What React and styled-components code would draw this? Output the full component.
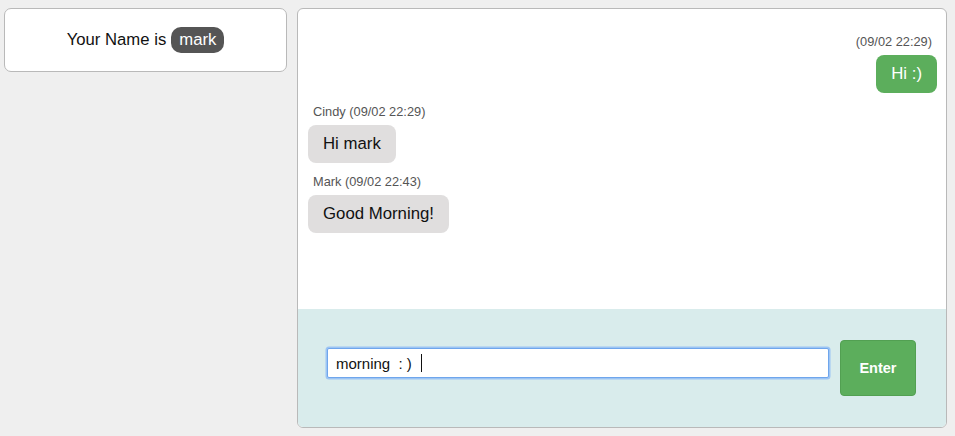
import React from 'react'
import styled, { createGlobalStyle } from 'styled-components'

const GlobalStyle = createGlobalStyle`
  html, body {
    margin: 0;
    padding: 0;
    background: #efefef;
    font-family: "Liberation Sans", Arial, sans-serif;
  }
`

const messages = [
  { id: 1, mine: true, name: '', time: '(09/02 22:29)', text: 'Hi :)' },
  { id: 2, mine: false, name: 'Cindy', time: '(09/02 22:29)', text: 'Hi mark' },
  { id: 3, mine: false, name: 'Mark', time: '(09/02 22:43)', text: 'Good Morning!' },
]

function App() {
  return (
    <Page>
      <GlobalStyle />
      <NameCard>
        Your Name is <NameBadge>mark</NameBadge>
      </NameCard>
      <ChatPanel>
        <MessageList>
          {messages.map(m => (
            <Message key={m.id} mine={m.mine}>
              <Meta>{m.name ? `${m.name} ${m.time}` : m.time}</Meta>
              <Bubble mine={m.mine}>{m.text}</Bubble>
            </Message>
          ))}
        </MessageList>
        <Composer>
          <InputBox>
            morning&nbsp;&nbsp;:&nbsp;)<Caret />
          </InputBox>
          <EnterButton>Enter</EnterButton>
        </Composer>
      </ChatPanel>
    </Page>
  )
}

export default App

const Page = styled.div`
  display: flex;
  align-items: flex-start;
  gap: 10px;
  padding: 8px 8px 8px 4px;
`

const NameCard = styled.div`
  width: 283px;
  height: 64px;
  box-sizing: border-box;
  background: #fff;
  border: 1px solid #b9b9b9;
  border-radius: 7px;
  display: flex;
  align-items: center;
  justify-content: center;
  gap: 5px;
  font-size: 16.7px;
  color: #111;
`

const NameBadge = styled.span`
  background: #555;
  color: #fff;
  border-radius: 10px;
  padding: 3px 8px 4px;
  line-height: 19px;
`

const ChatPanel = styled.div`
  width: 650px;
  height: 420px;
  box-sizing: border-box;
  background: #fff;
  border: 1px solid #b9b9b9;
  border-radius: 6px;
  overflow: hidden;
  display: flex;
  flex-direction: column;
`

const MessageList = styled.div`
  flex: 1;
  display: flex;
  flex-direction: column;
  gap: 11px;
  padding: 25px 9px 0 10px;
`

const Message = styled.div`
  display: flex;
  flex-direction: column;
  align-items: ${p => (p.mine ? 'flex-end' : 'flex-start')};
`

const Meta = styled.div`
  font-size: 12.8px;
  line-height: 16px;
  color: #555;
  margin: 0 5px 5px;
`

const Bubble = styled.div`
  height: 38px;
  box-sizing: border-box;
  display: flex;
  align-items: center;
  padding: 0 15px;
  border-radius: 8px;
  font-size: 16.8px;
  background: ${p => (p.mine ? '#5cae5c' : '#e0dede')};
  color: ${p => (p.mine ? '#fff' : '#111')};
`

const Composer = styled.div`
  height: 118px;
  flex-shrink: 0;
  background: #d9ecec;
  display: flex;
  align-items: center;
  gap: 11px;
  padding: 0 30px 0 29px;
`

const InputBox = styled.div`
  flex: 1;
  height: 30px;
  box-sizing: border-box;
  margin-bottom: 10px;
  background: #fff;
  border: 1px solid #6fa6ec;
  box-shadow: 0 0 0 1.5px #9cc4f4;
  border-radius: 2px;
  display: flex;
  align-items: center;
  padding: 0 8px;
  font-size: 15px;
  color: #111;
  white-space: pre;
`

const Caret = styled.span`
  display: inline-block;
  width: 1px;
  height: 18px;
  background: #111;
  margin-left: 9px;
`

const EnterButton = styled.button`
  width: 76px;
  height: 56px;
  background: #5cae5c;
  border: 1px solid #52a052;
  border-radius: 4px;
  color: #fff;
  font-family: "Liberation Sans", Arial, sans-serif;
  font-weight: bold;
  font-size: 14.5px;
  cursor: pointer;
`
